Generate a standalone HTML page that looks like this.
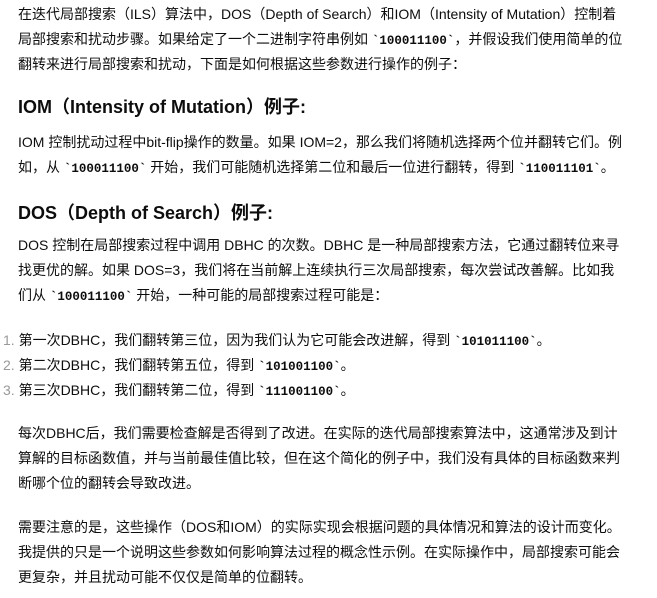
<!DOCTYPE html>
<html><head><meta charset="utf-8"><style>
body{margin:0;background:#fff;width:657px;height:598px;overflow:hidden;font-family:"Liberation Sans","Noto Sans CJK SC",sans-serif;color:#0d0d0d;font-size:14px;}
.l{position:absolute;line-height:25px;white-space:nowrap;}
code{font-family:"Liberation Mono","Noto Sans CJK SC",monospace;font-weight:bold;font-size:12.5px;line-height:1;}
h3{position:absolute;margin:0;font-size:18px;font-weight:bold;white-space:nowrap;line-height:25px;}
.n{color:#999;}
</style></head><body>
<div class="l" style="left:18px;top:2px">在迭代局部搜索（ILS）算法中，DOS（Depth of Search）和IOM（Intensity of Mutation）控制着<br>局部搜索和扰动步骤。如果给定了一个二进制字符串例如 <code>`100011100`</code>，并假设我们使用简单的位<br>翻转来进行局部搜索和扰动，下面是如何根据这些参数进行操作的例子：</div>
<h3 style="left:18px;top:95px">IOM（Intensity of Mutation）例子:</h3>
<div class="l" style="left:18px;top:130px">IOM 控制扰动过程中bit-flip操作的数量。如果 IOM=2，那么我们将随机选择两个位并翻转它们。例<br>如，从 <code>`100011100`</code> 开始，我们可能随机选择第二位和最后一位进行翻转，得到 <code>`110011101`</code>。</div>
<h3 style="left:18px;top:201px">DOS（Depth of Search）例子:</h3>
<div class="l" style="left:18px;top:233px">DOS 控制在局部搜索过程中调用 DBHC 的次数。DBHC 是一种局部搜索方法，它通过翻转位来寻<br>找更优的解。如果 DOS=3，我们将在当前解上连续执行三次局部搜索，每次尝试改善解。比如我<br>们从 <code>`100011100`</code> 开始，一种可能的局部搜索过程可能是：</div>
<div class="l" style="left:3px;top:328px"><span class="n">1.</span> 第一次DBHC，我们翻转第三位，因为我们认为它可能会改进解，得到 <code>`101011100`</code>。<br><span class="n">2.</span> 第二次DBHC，我们翻转第五位，得到 <code>`101001100`</code>。<br><span class="n">3.</span> 第三次DBHC，我们翻转第二位，得到 <code>`111001100`</code>。</div>
<div class="l" style="left:18px;top:421px">每次DBHC后，我们需要检查解是否得到了改进。在实际的迭代局部搜索算法中，这通常涉及到计<br>算解的目标函数值，并与当前最佳值比较，但在这个简化的例子中，我们没有具体的目标函数来判<br>断哪个位的翻转会导致改进。</div>
<div class="l" style="left:18px;top:515px">需要注意的是，这些操作（DOS和IOM）的实际实现会根据问题的具体情况和算法的设计而变化。<br>我提供的只是一个说明这些参数如何影响算法过程的概念性示例。在实际操作中，局部搜索可能会<br>更复杂，并且扰动可能不仅仅是简单的位翻转。</div>
</body></html>
